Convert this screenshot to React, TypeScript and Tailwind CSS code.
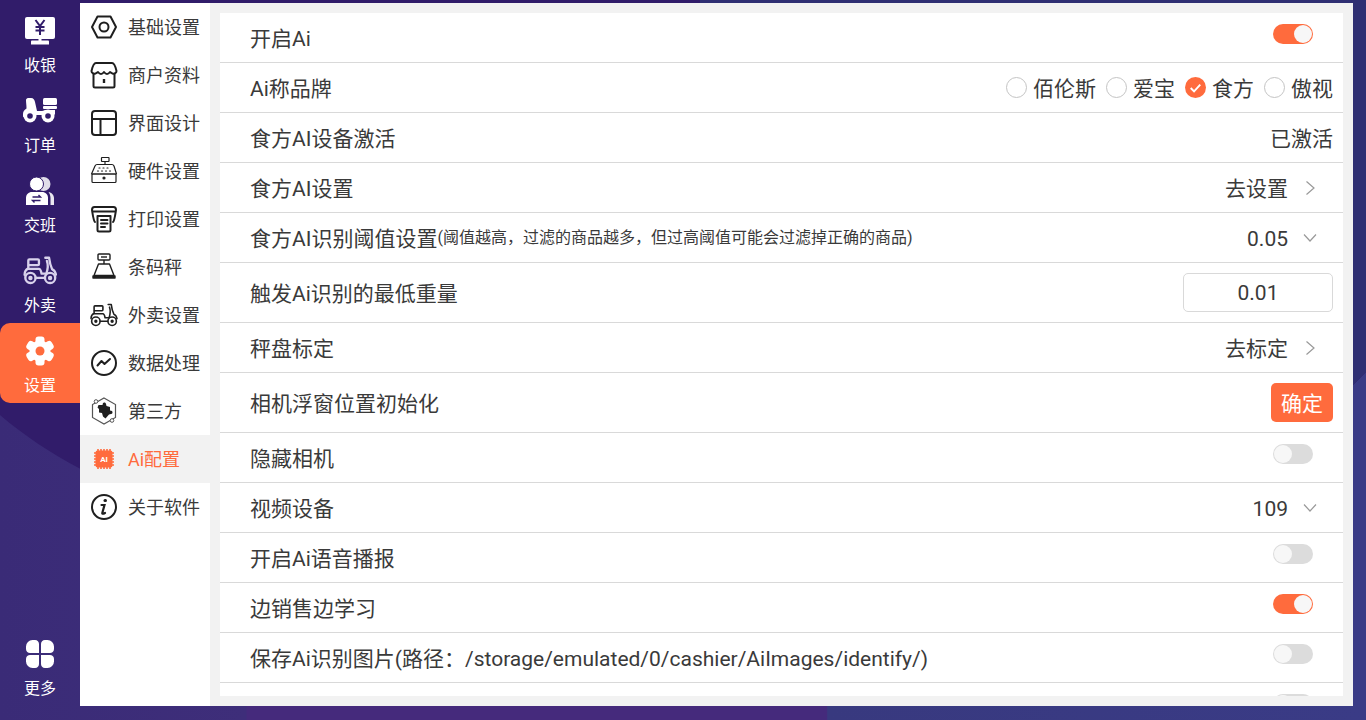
import React from "react";

const ORANGE = "#ff6b3d";
const RAIL = "#311c6a";

const Svg: React.FC<{ size?: number; className?: string; children: React.ReactNode }> = ({
  size = 32,
  className,
  children,
}) => (
  <svg width={size} height={size} viewBox="0 0 32 32" fill="none" className={className}>
    {children}
  </svg>
);

// left rail icons
const CashierIcon = () => (
  <Svg>
    <rect x="1" y="2" width="30" height="22" rx="2" fill="#fff" />
    <path d="M14.500 23h3v3h-3z" fill="#fff" />
    <path d="M7 26.500c0-.5.5-1 1-1h16c.5 0 1 .5 1 1v3H7z" fill="#fff" />
    <path d="M11.500 5 16 11l4.500-6M16 11v9M11.500 12h9M11.500 15.500h9" stroke={RAIL} strokeWidth="2" />
  </Svg>
);

const OrderIcon = () => (
  <svg width="36" height="36" viewBox="0 0 36 36" fill="none">
    <rect x="21" y="5" width="14" height="7" rx="1.500" fill="#fff" />
    <rect x="21" y="13" width="14" height="3" rx="1" fill="#fff" />
    <path
      d="M4 7c0-1 1-2 2-2h3c2.500 0 3.500 2 4 4l2 9h5c1.500-.5 3-1 5-1h8v4l-1 1H8L1 24v-3c0-2 1-4 3.500-5.500C4.500 12 4 10 4 7z"
      fill="#fff"
    />
    <circle cx="8" cy="23" r="6.500" fill="#fff" />
    <circle cx="8" cy="23" r="2.800" fill={RAIL} />
    <circle cx="26" cy="23" r="6.500" fill="#fff" />
    <circle cx="26" cy="23" r="2.800" fill={RAIL} />
  </svg>
);

const ShiftIcon = () => (
  <Svg>
    <circle cx="19.500" cy="9" r="7" fill="#fff" opacity=".85" />
    <circle cx="12.500" cy="9" r="7" fill="#fff" stroke={RAIL} strokeWidth="1" />
    <path d="M2 30v-7c0-3.500 2.500-6 6-6h10c3.500 0 6 2.500 6 6v7z" fill="#fff" />
    <path d="M24.500 17c3 .5 5.500 3 5.500 6v7h-3.500v-7c0-2-.8-4.500-2-6z" fill="#fff" opacity=".9" />
    <path d="M8.500 22h8l-2-2M16.500 25.500h-8l2 2" stroke={RAIL} strokeWidth="1.400" />
  </Svg>
);

const ScooterPaths: React.FC<{ color: string; width?: number }> = ({ color, width = 2 }) => (
  <g stroke={color} strokeWidth={width} strokeLinecap="round" strokeLinejoin="round">
    <rect x="5" y="5" width="10" height="5.500" rx="1" />
    <path d="M21 3.500h3.500c.5 4 1.500 8 3 11 1.500 .5 3 2.500 3.500 5" />
    <path d="M5 10.500v3c-2 1-3.500 3.500-3.500 6" />
    <path d="M5 14h10c1 0 2 2 2.500 4.500h4.500c1-3 2-8 .5-12" />
    <circle cx="7" cy="22.500" r="4.800" />
    <circle cx="7" cy="22.500" r="1" />
    <circle cx="25.500" cy="22.500" r="4.800" />
    <circle cx="25.500" cy="22.500" r="1" />
    <path d="M12 22.500h8.500" />
  </g>
);

const GearIcon = () => (
  <Svg>
    <g fill="#fff">
      {[0, 60, 120, 180, 240, 300].map((deg) => (
        <rect key={deg} x="11.500" y="1.500" width="9" height="10" rx="3" transform={`rotate(${deg} 16 16)`} />
      ))}
      <circle cx="16" cy="16" r="10.500" />
    </g>
    <circle cx="16" cy="16" r="4.500" fill={ORANGE} />
  </Svg>
);

const MoreIcon = () => (
  <Svg>
    <g fill="#fff">
      <path d="M2 8.500a6.500 6.500 0 0 1 6.500-6.500H11c2.500 0 4 2 4 4v9H6c-2 0-4-1.500-4-4z" />
      <path d="M30 8.500A6.500 6.500 0 0 0 23.500 2H21c-2.500 0-4 2-4 4v9h9c2 0 4-1.500 4-4z" />
      <path d="M2 23.500A6.500 6.500 0 0 0 8.500 30H11c2.500 0 4-2 4-4v-9H6c-2 0-4 1.500-4 4z" />
      <path d="M30 23.500a6.500 6.500 0 0 1-6.500 6.500H21c-2.500 0-4-2-4-4v-9h9c2 0 4 1.500 4 4z" />
    </g>
  </Svg>
);

// settings menu icons
const INK = "#1f1f1f";

const menuIcons: Record<string, React.ReactNode> = {
  nut: (
    <g stroke={INK} strokeWidth="2">
      <path d="M9.500 5.500h13L28 16l-5.500 10.500h-13L4 16z" strokeLinejoin="round" />
      <circle cx="16" cy="16" r="4.500" />
    </g>
  ),
  shop: (
    <g stroke={INK} strokeWidth="2" strokeLinejoin="round">
      <path d="M8 4h16c2 0 3.500 3.500 4.500 8 0 2-2 3-4 2.500-1-.3-2.500-1.500-2.500-1.500s-1.500 2-3 2-3-2-3-2-1.500 2-3 2-3-2-3-2-1.500 1.200-2.500 1.500c-2 .5-4-.5-4-2.500C4.500 7.500 6 4 8 4z" />
      <path d="M5.500 14.500V27c0 1 .5 1.500 1.500 1.500h18c1 0 1.500-.5 1.500-1.500V14.500" />
      <path d="M16 20v4" strokeWidth="2.400" />
    </g>
  ),
  layout: (
    <g stroke={INK} strokeWidth="2">
      <rect x="4" y="4" width="24" height="24" rx="3" />
      <path d="M4 12h24M12.500 12v16" />
    </g>
  ),
  register: (
    <g stroke={INK} strokeWidth="1.200" strokeLinejoin="round">
      <rect x="13.500" y="2.500" width="7.500" height="4" rx=".5" />
      <path d="M17 6.500v3M9 9.500h15c1 0 1.500 .5 2 1.500l2.500 8h-25L7 11c.5-1 1-1.500 2-1.500z" />
      <rect x="4" y="19" width="24" height="8.500" rx="1" />
      <path d="M11 13h1M15 13h1M19 13h1M9.500 16h1M13.500 16h1M17.500 16h1M21.500 16h1" strokeLinecap="round" />
      <circle cx="16" cy="23" r="1" fill={INK} />
    </g>
  ),
  printer: (
    <g stroke={INK} strokeWidth="2" strokeLinecap="round" strokeLinejoin="round">
      <path d="M7 19C5.500 18 4.500 10 4 7c0-2 1-3 2.500-3h19C27 4 28 5 28 7c-.5 3-1.500 11-3 12" />
      <path d="M5 8.500h22" />
      <path d="M9.500 13h13v14c0 1-.5 1.500-1.500 1.500H11c-1 0-1.500-.5-1.500-1.500z" />
      <path d="M13 17h6.500M13 20.500h6.500M13 24h4" />
    </g>
  ),
  scale: (
    <g stroke={INK} strokeWidth="1.400" strokeLinejoin="round">
      <rect x="10" y="3" width="12" height="6" rx="1" />
      <path d="M13 6h6" />
      <path d="M16 9v4M10.500 13h11l4.500 11.500H6z" />
      <path d="M5 25h22v2H5z" fill={INK} />
    </g>
  ),
  scooter: (
    <g transform="translate(1.700 2.450) scale(.88)">
      <ScooterPaths color={INK} width={1.800} />
    </g>
  ),
  chart: (
    <g stroke={INK} strokeWidth="2" strokeLinecap="round" strokeLinejoin="round">
      <circle cx="16" cy="16" r="12" />
      <path d="M9.500 18.500 13.500 14l3 3 5.500-5" />
    </g>
  ),
  puzzle: (
    <g>
      <path d="M16 3 27.500 9.500v13L16 29 4.500 22.500v-13z" stroke="#555" strokeWidth="1.200" />
      <circle cx="8" cy="6.500" r="1.800" fill="#fff" stroke="#555" />
      <circle cx="24" cy="25.500" r="1.800" fill="#fff" stroke="#555" />
      <path
        d="M10.500 10h4l.5-2c1-1 3-.5 3 1l.5 2 3.500 1v3.500l2 .5c1 1 .5 3-1 3l-2 .5-3.500 4-2.500-2-1-3.500-3-.5v-3.500l-1.500-1.500z"
        fill={INK}
      />
    </g>
  ),
  chip: (
    <g>
      <path
        d="M10 6v20M13 6v20M16 6v20M19 6v20M22 6v20M6 10h20M6 13h20M6 16h20M6 19h20M6 22h20"
        stroke={ORANGE}
        strokeWidth="1.600"
      />
      <rect x="7.500" y="7.500" width="17" height="17" rx="2" fill={ORANGE} />
      <text x="16" y="19" textAnchor="middle" fontSize="8" fontWeight="700" fill="#fff" fontFamily="Roboto, sans-serif">
        AI
      </text>
    </g>
  ),
  info: (
    <g stroke={INK} strokeLinecap="round">
      <circle cx="16" cy="16" r="12" strokeWidth="2" />
      <path d="M13.500 14h3l-2.200 8c-.2 1 .8 1 2.700 0" strokeWidth="2.200" />
      <path d="M17 9.500h.5" strokeWidth="3" />
    </g>
  ),
};

const railItems = [
  { label: "收银", icon: <CashierIcon /> },
  { label: "订单", icon: <OrderIcon /> },
  { label: "交班", icon: <ShiftIcon /> },
  {
    label: "外卖",
    icon: (
      <Svg size={34}>
        <ScooterPaths color="#d9d2ec" width={2.2} />
      </Svg>
    ),
  },
  { label: "设置", icon: <GearIcon />, active: true },
];

const menuItems = [
  { label: "基础设置", icon: "nut" },
  { label: "商户资料", icon: "shop" },
  { label: "界面设计", icon: "layout" },
  { label: "硬件设置", icon: "register" },
  { label: "打印设置", icon: "printer" },
  { label: "条码秤", icon: "scale" },
  { label: "外卖设置", icon: "scooter" },
  { label: "数据处理", icon: "chart" },
  { label: "第三方", icon: "puzzle" },
  { label: "Ai配置", icon: "chip", active: true },
  { label: "关于软件", icon: "info" },
];

const RailItem: React.FC<{ label: string; icon: React.ReactNode; active?: boolean }> = ({ label, icon, active }) => (
  <div
    className={
      "relative flex h-20 w-20 flex-col items-center text-base text-white " +
      (active ? "rounded-l-[10px] bg-[#ff6b3d]" : "")
    }
  >
    <div className="flex h-[55px] items-center justify-center">{icon}</div>
    <span className="leading-[16px]">{label}</span>
  </div>
);

const Toggle: React.FC<{ on?: boolean }> = ({ on }) => (
  <div
    className={
      "mt-[11px] mr-5 h-5 w-10 shrink-0 self-start rounded-full p-px " + (on ? "bg-[#ff6b3d]" : "bg-[#dcdcdc]")
    }
  >
    <div className={"h-[18px] w-[18px] rounded-full bg-[#f7f7f7] " + (on ? "ml-5" : "")} />
  </div>
);

const ChevronRight = () => (
  <svg width="12" height="14" viewBox="0 0 12 14" fill="none" className="mr-4 ml-[17px]">
    <path d="M1.500 .5 9 7l-7.500 6.500" stroke="#999" strokeWidth="1.200" />
  </svg>
);

const ChevronDown = () => (
  <svg width="14" height="10" viewBox="0 0 14 10" fill="none" className="mr-4 ml-[15px]">
    <path d="M1 1.500 7 8l6-6.500" stroke="#999" strokeWidth="1.200" />
  </svg>
);

const Radio: React.FC<{ label: string; checked?: boolean }> = ({ label, checked }) => (
  <div className="flex items-center gap-[6px]">
    {checked ? (
      <svg width="21" height="21" viewBox="0 0 22 22">
        <circle cx="11" cy="11" r="11" fill={ORANGE} />
        <path d="M6 11.500 9.500 15 16 8" stroke="#fff" strokeWidth="2" fill="none" />
      </svg>
    ) : (
      <div className="h-[21px] w-[21px] rounded-full border border-[#c4c4c4]" />
    )}
    <span className="pt-1">{label}</span>
  </div>
);

const Row: React.FC<{ title: React.ReactNode; tall?: boolean; children?: React.ReactNode }> = ({
  title,
  tall,
  children,
}) => (
  <div
    className={
      "flex shrink-0 items-center justify-between border-b border-[#d9d9d9] pr-[10px] pl-[30px] " +
      (tall ? "h-[60px]" : "h-[50px]")
    }
  >
    <div className="pt-1">{title}</div>
    {children}
  </div>
);

export default function App() {
  return (
    <div className="relative flex h-[720px] w-[1366px] items-start overflow-hidden bg-[linear-gradient(90deg,#3a2b77_0%,#3e2e7a_18%,#452a7c_18.100%,#452a7c_60.500%,#38397f_60.600%,#3a3b86_100%)] font-['Roboto','Noto_Sans_CJK_SC',sans-serif]">
      {/* wallpaper */}
      <svg width="1366" height="720" viewBox="0 0 1366 720" className="absolute inset-0">
        <path d="M0 0h1366v372l-13 13C1100 560 700 620 300 540 170 515 70 475 0 415z" fill={RAIL} />
        <path d="M700 0h666v372l-13 13C1200 480 1000 540 700 580z" fill="#2f2f73" />
      </svg>

      <nav className="relative mt-[3px] flex h-[703px] w-20 shrink-0 flex-col">
        {railItems.map((item) => (
          <RailItem key={item.label} {...item} />
        ))}
        <div className="mt-auto">
          <RailItem label="更多" icon={<MoreIcon />} />
        </div>
      </nav>

      <main className="relative mt-[3px] flex h-[703px] w-[1273px] bg-[#f2f2f2]">
        <aside className="h-full w-[130px] shrink-0 bg-white">
          {menuItems.map((item) => (
            <div
              key={item.label}
              className={
                "flex h-12 items-center gap-2 pl-2 text-lg " +
                (item.active ? "bg-[#f2f2f2] text-[#ff6b3d]" : "text-[#3a3a3a]")
              }
            >
              <Svg>{menuIcons[item.icon]}</Svg>
              <span className="pt-[2px]">{item.label}</span>
            </div>
          ))}
        </aside>

        <section className="mt-[10px] ml-[10px] flex h-[683px] w-[1123px] flex-col overflow-hidden bg-white text-[21px] text-[#3a3a3a]">
          <Row title="开启Ai">
            <Toggle on />
          </Row>
          <Row title="Ai称品牌">
            <div className="flex gap-[10px]">
              <Radio label="佰伦斯" />
              <Radio label="爱宝" />
              <Radio label="食方" checked />
              <Radio label="傲视" />
            </div>
          </Row>
          <Row title="食方AI设备激活">
            <span className="pt-1">已激活</span>
          </Row>
          <Row title="食方AI设置">
            <div className="flex items-center">
              <span className="pt-1">去设置</span>
              <ChevronRight />
            </div>
          </Row>
          <Row
            title={
              <span>
                食方AI识别阈值设置
                <span className="align-[3px] text-base">(阈值越高，过滤的商品越多，但过高阈值可能会过滤掉正确的商品)</span>
              </span>
            }
          >
            <div className="flex items-center">
              <span className="pt-1">0.05</span>
              <ChevronDown />
            </div>
          </Row>
          <Row title="触发Ai识别的最低重量" tall>
            <div className="flex h-[39px] w-[150px] items-center justify-center rounded-[5px] border border-[#d9d9d9] pt-[3px]">
              0.01
            </div>
          </Row>
          <Row title="秤盘标定">
            <div className="flex items-center">
              <span className="pt-1">去标定</span>
              <ChevronRight />
            </div>
          </Row>
          <Row title="相机浮窗位置初始化" tall>
            <button className="flex h-[39px] w-[62px] items-center justify-center rounded-[5px] bg-[#ff6b3d] pt-1 text-white">
              确定
            </button>
          </Row>
          <Row title="隐藏相机">
            <Toggle />
          </Row>
          <Row title="视频设备">
            <div className="flex items-center">
              <span className="pt-1">109</span>
              <ChevronDown />
            </div>
          </Row>
          <Row title="开启Ai语音播报">
            <Toggle />
          </Row>
          <Row title="边销售边学习">
            <Toggle on />
          </Row>
          <Row title="保存Ai识别图片(路径：/storage/emulated/0/cashier/AiImages/identify/)">
            <Toggle />
          </Row>
          <Row title="">
            <Toggle />
          </Row>
        </section>
      </main>
    </div>
  );
}
